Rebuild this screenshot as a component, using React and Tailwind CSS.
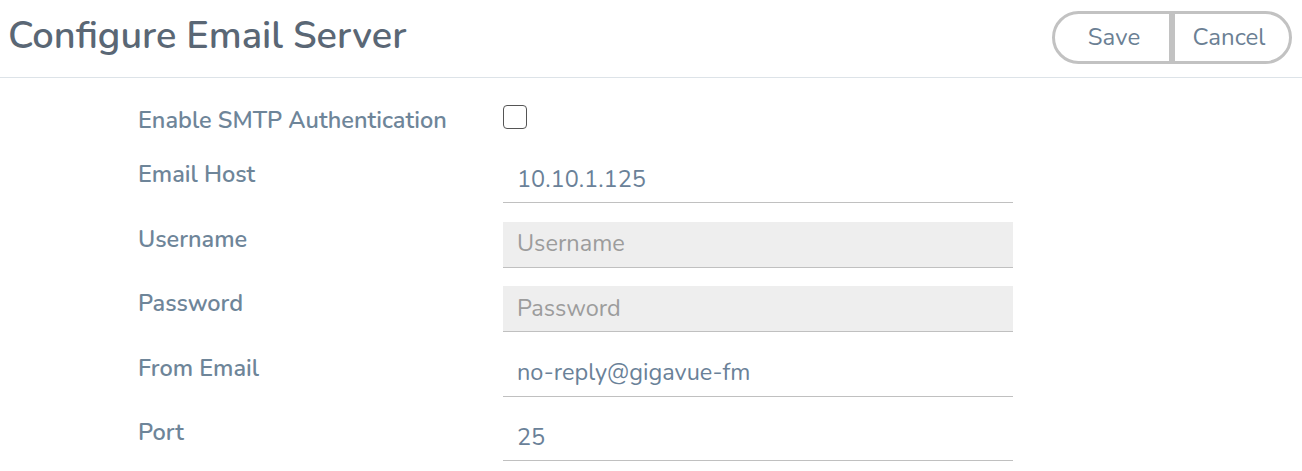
import React from "react";

const fields = [
  { label: "Email Host", value: "10.10.1.125" },
  { label: "Username", placeholder: "Username", disabled: true },
  { label: "Password", placeholder: "Password", disabled: true },
  { label: "From Email", value: "no-reply@gigavue-fm" },
  { label: "Port", value: "25" },
];

const App = () => {
  return (
    <div
      className="w-[1302px] h-[471px] bg-white overflow-hidden"
      style={{ fontFamily: "Nunito, 'Open Sans', sans-serif" }}
    >
      <header className="h-[78px] flex items-center justify-between pl-[8px] pr-[10px] border-b border-[#dde3e8]">
        <h1 className="text-[38px] font-semibold text-[#5a6775] -mt-[5px] leading-[44px]">
          Configure Email Server
        </h1>
        <div className="flex -mt-[3px]">
          <button
            type="button"
            className="w-[120px] h-[53px] border-[3px] border-[#c2c2c2] rounded-l-full text-[24px] text-[#6b8094] pl-[4px]"
          >
            Save
          </button>
          <button
            type="button"
            className="w-[120px] h-[53px] border-[3px] border-[#c2c2c2] rounded-r-full text-[24px] text-[#6b8094] pr-[6px]"
          >
            Cancel
          </button>
        </div>
      </header>

      <form className="pl-[138px] pt-[26px]">
        <div className="flex items-center h-[31px] mb-[22px]">
          <label className="w-[365px] text-[23.5px] font-semibold text-[#6e8599] leading-[30px]">
            Enable SMTP Authentication
          </label>
          <span className="w-[24px] h-[24px] rounded-[4px] border border-[#555] -mt-[6px]" />
        </div>

        {fields.map((f) => (
          <div key={f.label} className="flex items-start mb-[18.5px]">
            <label className="w-[365px] text-[23.5px] font-semibold text-[#6e8599] leading-[30px] pt-[2px]">
              {f.label}
            </label>
            <div
              className={`w-[510px] h-[46px] flex items-center px-[14px] border-b border-[#c0c0c0] text-[23.5px] ${
                f.disabled ? "bg-[#eeeeee] text-[#9c9c9c]" : "text-[#6a8198]"
              }`}
            >
              {f.value || f.placeholder}
            </div>
          </div>
        ))}
      </form>
    </div>
  );
};

export default App;
